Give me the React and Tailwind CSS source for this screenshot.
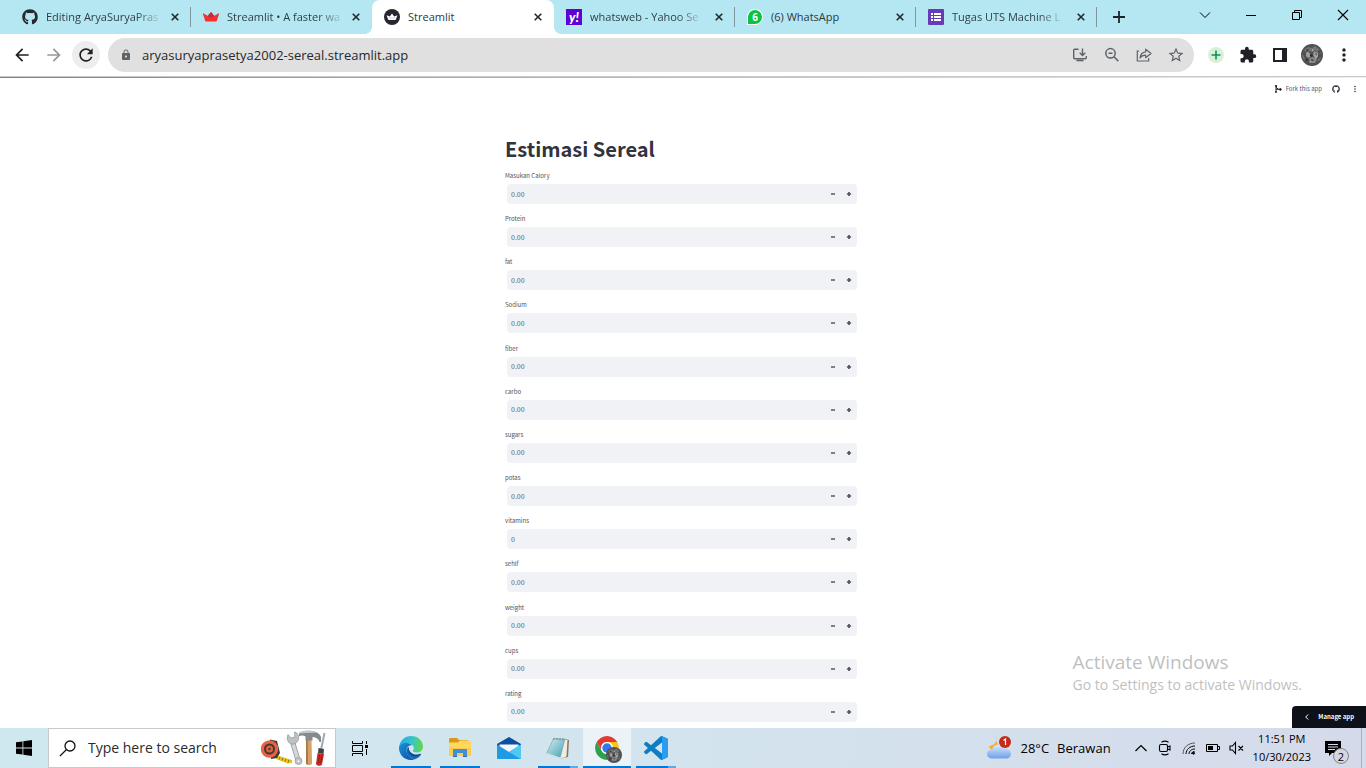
import React, { useState } from "react";
import { FaGithub } from "react-icons/fa";
import {
  MdArrowBack,
  MdArrowForward,
  MdRefresh,
  MdLock,
  MdStarBorder,
  MdExtension,
  MdMoreVert,
} from "react-icons/md";

const FIELDS = [
  ["calory", "Masukan Calory", "0.00"],
  ["protein", "Protein", "0.00"],
  ["fat", "fat", "0.00"],
  ["sodium", "Sodium", "0.00"],
  ["fiber", "fiber", "0.00"],
  ["carbo", "carbo", "0.00"],
  ["sugars", "sugars", "0.00"],
  ["potas", "potas", "0.00"],
  ["vitamins", "vitamins", "0"],
  ["sehlf", "sehlf", "0.00"],
  ["weight", "weight", "0.00"],
  ["cups", "cups", "0.00"],
  ["rating", "rating", "0.00"],
];

/* ---------- Tab icons ---------- */

function StreamlitCrown() {
  return (
    <svg viewBox="0 0 16 16" className="size-4">
      <path d="M0 4.200 4.600 7 8 3l3.400 4L16 4.200l-2 7.400c-.2.6-.6.9-1.200.9H3.200c-.6 0-1-.3-1.200-.9z" fill="#ff2b2b" />
      <path d="M8 3l3.400 4-1.400 1.500H6L4.600 7z" fill="#b5363d" />
      <path d="M0 4.200 4.600 7l1.400 1.500H1.200zM16 4.200 11.400 7 10 8.500h4.800z" fill="#e8373b" />
    </svg>
  );
}

function StreamlitRound() {
  return (
    <svg viewBox="0 0 16 16" className="size-4">
      <circle cx="8" cy="8" r="8" fill="#262730" />
      <path d="M2.600 6.200 5.800 7.600 8 4.600l2.200 3 3.200-1.400-1.400 4c-.2.5-.5.7-1 .7H5c-.5 0-.8-.2-1-.7z" fill="#fff" />
      <path d="M4.500 9h7" stroke="#b9bac0" strokeWidth=".6" />
    </svg>
  );
}

function YahooIcon() {
  return (
    <span className="flex size-4 items-center justify-center bg-[#5f01d1] font-['Lato','Liberation_Sans',sans-serif] text-[13px] leading-none font-black text-white italic">
      y!
    </span>
  );
}

function WhatsAppIcon() {
  return (
    <span className="flex size-4 items-center justify-center rounded-full rounded-bl-sm border border-white bg-[#0dc143] font-['Open_Sans',sans-serif] text-[10px] leading-none font-bold text-white">
      6
    </span>
  );
}

function FormsIcon() {
  return (
    <svg viewBox="0 0 16 16" className="size-4">
      <rect width="16" height="16" rx="1" fill="#673ab7" />
      <path d="M3 4h2v2H3zM3 7h2v2H3zM3 10h2v2H3zM6 4h7v2H6zM6 7h7v2H6zM6 10h7v2H6z" fill="#fff" />
    </svg>
  );
}

const TABS = [
  { title: "Editing AryaSuryaPras", icon: <FaGithub className="size-4 text-[#24292f]" />, line: true, fade: true },
  { title: "Streamlit • A faster wa", icon: <StreamlitCrown />, fade: true },
  { title: "Streamlit", icon: <StreamlitRound />, active: true },
  { title: "whatsweb - Yahoo Se", icon: <YahooIcon />, line: true, fade: true },
  { title: "(6) WhatsApp", icon: <WhatsAppIcon />, line: true },
  { title: "Tugas UTS Machine L", icon: <FormsIcon />, line: true, fade: true },
];

function Tab({ tab }) {
  return (
    <div
      className={
        tab.active
          ? "relative flex h-full min-w-0 flex-[0_1_182px] items-center rounded-t-lg bg-white px-3 before:absolute before:bottom-0 before:-left-2 before:size-2 before:bg-[radial-gradient(circle_at_0_0,transparent_8px,white_8px)] after:absolute after:-right-2 after:bottom-0 after:size-2 after:bg-[radial-gradient(circle_at_100%_0,transparent_8px,white_8px)]"
          : "relative flex h-full min-w-0 flex-[0_1_181px] items-center px-3"
      }
    >
      {tab.icon}
      <button
        type="button"
        className={
          tab.fade
            ? "ml-2 bg-linear-to-r from-[#2a3a40] from-80% to-[#a5c6ce] bg-clip-text text-[11px] leading-4 whitespace-nowrap text-transparent"
            : "ml-2 text-[11px] leading-4 whitespace-nowrap text-[#2a3a40]"
        }
      >
        {tab.title}
      </button>
      <button type="button" aria-label="Close tab" className="ml-auto text-[#20292c]">
        <svg viewBox="0 0 8 8" className="size-2">
          <path d="M.7.7l6.600 6.600M7.300.7.7 7.300" stroke="currentColor" strokeWidth="1.600" />
        </svg>
      </button>
      {tab.line && <span className="absolute right-0 h-5 w-px bg-[#7d979d]" />}
    </div>
  );
}

function TabStrip() {
  return (
    <div className="flex h-[34px] items-center bg-[#b4e7f2] pl-2.5">
      {TABS.map((t) => (
        <Tab key={t.title} tab={t} />
      ))}
      <button type="button" aria-label="New tab" className="ml-4 text-[#1c2629]">
        <svg viewBox="0 0 12 12" className="size-3">
          <path d="M6 0v12M0 6h12" stroke="currentColor" strokeWidth="1.800" />
        </svg>
      </button>
      <div className="mb-1 ml-auto flex text-black">
        <button type="button" aria-label="Search tabs" className="flex w-[46px] justify-center">
          <svg viewBox="0 0 12 12" className="size-3" fill="none" stroke="currentColor">
            <path d="M1 3.500l5 5 5-5" />
          </svg>
        </button>
        <button type="button" aria-label="Minimize" className="flex w-[46px] justify-center">
          <svg viewBox="0 0 12 12" className="size-3">
            <path d="M1 6h10v1H1z" />
          </svg>
        </button>
        <button type="button" aria-label="Restore" className="flex w-[46px] justify-center">
          <svg viewBox="0 0 12 12" className="size-3" fill="none" stroke="currentColor">
            <path d="M1.500 3.500h7v7h-7zM3.500 3V1.500h7v7H9" />
          </svg>
        </button>
        <button type="button" aria-label="Close window" className="flex w-[46px] justify-center">
          <svg viewBox="0 0 12 12" className="size-3" fill="none" stroke="currentColor" strokeWidth="1.100">
            <path d="M1 1l10 10M11 1L1 11" />
          </svg>
        </button>
      </div>
    </div>
  );
}

/* ---------- Toolbar ---------- */

function IconButton({ label, children }) {
  return (
    <button type="button" aria-label={label} className="flex size-8 shrink-0 items-center justify-center">
      {children}
    </button>
  );
}

function PhotoAvatar({ className }) {
  return (
    <svg viewBox="0 0 22 22" className={className}>
      <circle cx="11" cy="11" r="11" fill="#505050" />
      <path d="M3 6l4-3 4 1 3-2 4 3 2 5-3-1-3-3-3 2-3-1-2 3z" fill="#747474" />
      <path d="M5 9l4 0 1 3-3 2-2-2zM13 7l4 2 0 4-3 1-2-3z" fill="#9c9c9c" />
      <path d="M8 14l4-1 4 2-2 4-5 0z" fill="#868686" />
      <path d="M1 10l2 2 1 4-2-1zM17 15l3-2-1 3-3 2z" fill="#707070" />
      <path d="M9 10l3 1-1 2-2-1zM14 9l2 1-1 1zM10 15l3 1-2 1zM18 6l1 3-2-1zM5 14l2 2-2 1zM6 5l2 1-3 2z" fill="#2a2a2a" />
      <path d="M11 5l2 1-2 1zM7 8l1 1-2 0zM15 12l1 2-2 1zM8 17l2 1-1 1z" fill="#bcbcbc" />
    </svg>
  );
}

function Toolbar() {
  return (
    <div className="flex h-[42px] items-center bg-white px-1.5">
      <IconButton label="Back">
        <MdArrowBack className="size-5 text-[#202124]" />
      </IconButton>
      <IconButton label="Forward">
        <MdArrowForward className="size-5 text-[#96989a]" />
      </IconButton>
      <IconButton label="Reload">
        <span className="flex size-7 items-center justify-center rounded-full bg-[#ededed]">
          <MdRefresh className="size-5 text-[#202124]" />
        </span>
      </IconButton>
      <div className="mx-1.5 flex h-[34px] min-w-0 flex-1 items-center rounded-full bg-[#e0e0e0] pr-0.5 pl-3">
        <MdLock className="size-3 text-[#5f6368]" />
        <input
          aria-label="Address"
          defaultValue="aryasuryaprasetya2002-sereal.streamlit.app"
          className="ml-2.5 min-w-0 flex-1 bg-transparent text-[13px] leading-5 text-[#26292c] outline-none"
        />
        <IconButton label="Install app">
          <svg viewBox="0 0 16 16" className="size-4" fill="none" stroke="#5f6368" strokeWidth="1.400">
            <path d="M6.500 2.200H2.700a1 1 0 0 0-1 1v7.600a1 1 0 0 0 1 1h10.600a1 1 0 0 0 1-1V9" />
            <path d="M10.500 1.500v6.700M7.700 5.700l2.800 2.800 2.800-2.800" />
            <path d="M4.500 12.700h7v1.600h-7z" fill="#5f6368" stroke="none" />
          </svg>
        </IconButton>
        <IconButton label="Zoom">
          <svg viewBox="0 0 16 16" className="size-4" fill="none" stroke="#5f6368" strokeWidth="1.500">
            <circle cx="6.500" cy="6.300" r="4.700" />
            <path d="M10 9.800l4.300 4.300M4.500 6.300h4" />
          </svg>
        </IconButton>
        <IconButton label="Share">
          <svg viewBox="0 0 16 16" className="size-4" fill="none" stroke="#5f6368" strokeWidth="1.200">
            <path d="M3.200 4H1.300v10h11.400v-3" />
            <path d="M9.700 2.200l5.300 4.300-5.300 4.200V8.200C7 8.200 5.200 9 4 11c.3-3.300 2.300-5.800 5.700-6.200z" strokeLinejoin="round" />
          </svg>
        </IconButton>
        <IconButton label="Bookmark">
          <MdStarBorder className="size-[18px] text-[#5f6368]" />
        </IconButton>
      </div>
      <IconButton label="Add-on">
        <span className="flex size-4 items-center justify-center rounded-full bg-[#d8f1d6]">
          <svg viewBox="0 0 10 10" className="size-2.5">
            <path d="M5 .5v9M.5 5h9" stroke="#0e8f66" strokeWidth="1.600" />
          </svg>
        </span>
      </IconButton>
      <IconButton label="Extensions">
        <MdExtension className="size-[18px] text-[#202124]" />
      </IconButton>
      <IconButton label="Side panel">
        <svg viewBox="0 0 14 14" className="size-3.5">
          <path d="M0 0h14v14H0zM2 2v10h7V2z" fill="#202124" fillRule="evenodd" />
        </svg>
      </IconButton>
      <IconButton label="Profile">
        <PhotoAvatar className="size-[22px]" />
      </IconButton>
      <IconButton label="Menu">
        <MdMoreVert className="size-5 text-[#202124]" />
      </IconButton>
    </div>
  );
}

/* ---------- App page ---------- */

function NumberField({ id, label, initial }) {
  const [value, setValue] = useState(initial);
  const step = (d) => {
    const digits = initial.includes(".") ? 2 : 0;
    const next = Math.max(0, (parseFloat(value) || 0) + d * (digits ? 0.01 : 1));
    setValue(next.toFixed(digits));
  };
  return (
    <div>
      <label htmlFor={id} className="block text-[6px] leading-[11px] text-[#50525e]">
        {label}
      </label>
      <div className="mt-[3px] ml-0.5 flex h-5 items-center overflow-hidden rounded bg-[#f0f2f6]">
        <input
          id={id}
          inputMode="decimal"
          value={value}
          onChange={(e) => setValue(e.target.value)}
          className="min-w-0 flex-1 bg-transparent pl-1 text-[7px] leading-[11px] text-[#4c5f66] outline-none"
        />
        <button type="button" aria-label={"Decrease " + label} onClick={() => step(-1)} className="flex h-full w-4 items-center justify-center">
          <svg viewBox="0 0 6 6" className="size-1.5">
            <path d="M1 2h4v2H1z" fill="#7d808a" />
          </svg>
        </button>
        <button type="button" aria-label={"Increase " + label} onClick={() => step(1)} className="flex h-full w-4 items-center justify-center">
          <svg viewBox="0 0 6 6" className="size-1.5">
            <path d="M3 .9v4.200M.9 3h4.200" stroke="#50535e" strokeWidth="1.700" />
          </svg>
        </button>
      </div>
    </div>
  );
}

function StreamlitPage() {
  return (
    <main className="relative flex flex-1 flex-col bg-white font-['Noto_Sans_CJK_SC',sans-serif] text-[#31333f]">
      <header className="flex h-[22px] items-center justify-end pr-1.5">
        <a href="#fork" className="flex items-center gap-1 text-[6px] leading-3 text-[#515b70]">
          <svg viewBox="0 0 8 8" className="size-2" fill="none" stroke="#262730" strokeWidth="1">
            <path d="M2 .5v7M2 4.300h4M2 2.300l2.500 2" />
            <circle cx="2" cy="1" r=".7" fill="#262730" />
            <circle cx="2" cy="7" r=".5" fill="#262730" />
            <circle cx="6.400" cy="4.400" r=".9" fill="#262730" />
          </svg>
          Fork this app
        </a>
        <a href="#github" aria-label="Source on GitHub" className="ml-2.5">
          <FaGithub className="size-2" />
        </a>
        <button type="button" aria-label="App menu" className="ml-2.5">
          <MdMoreVert className="size-2.5" />
        </button>
      </header>
      <div className="flex flex-1 flex-col pt-9 pr-1 pb-1.5">
        <form onSubmit={(e) => e.preventDefault()} className="mx-auto flex w-full max-w-88 flex-1 flex-col">
          <h1 className="text-xl leading-[26px] font-bold">Estimasi Sereal</h1>
          <div className="mt-2 flex flex-1 flex-col justify-between">
            {FIELDS.map(([id, label, initial]) => (
              <NumberField key={id} id={id} label={label} initial={initial} />
            ))}
          </div>
        </form>
      </div>
      <div className="pointer-events-none absolute right-16 bottom-8 font-['Open_Sans',sans-serif] text-[#bfbfbf]">
        <p className="text-[19px] leading-6">Activate Windows</p>
        <p className="text-sm leading-[22px]">Go to Settings to activate Windows.</p>
      </div>
      <button
        type="button"
        className="absolute right-0 bottom-0 flex h-[22px] items-center gap-2 rounded-tl bg-[#0e1117] px-3 text-[6px] leading-3 font-bold text-white"
      >
        <svg viewBox="0 0 6 6" className="size-1.5" fill="none" stroke="#fff" strokeWidth="1">
          <path d="M4.200.5L1.700 3l2.500 2.500" />
        </svg>
        Manage app
      </button>
    </main>
  );
}

/* ---------- Taskbar ---------- */

function ToolsArt() {
  return (
    <svg viewBox="0 0 66 38" className="h-[38px] w-[66px] shrink-0">
      <path d="M15 26l16 5v3l-4 .5L15 30z" fill="#e8c51e" />
      <path d="M19 28l-1 2.500M22 29l-1 2.500M25 30l-1 2.500M28 31l-1 2.500" stroke="#5b4a10" strokeWidth=".7" />
      <path d="M9 10.500l7 1.500 3 12-3 5-6 1z" fill="#3e3a3c" />
      <circle cx="8.500" cy="20" r="8.700" fill="#ea6242" />
      <circle cx="8.500" cy="20" r="5.500" fill="#42373a" />
      <circle cx="8.500" cy="20" r="3.500" fill="#e0603f" />
      <circle cx="8.500" cy="20" r="1.300" fill="#4b3c3f" />
      <path d="M31.500 13l5.500 18" stroke="#8d9397" strokeWidth="5" />
      <path d="M31.500 13l5.500 18" stroke="#d3d7d9" strokeWidth="3.600" />
      <path d="M27 5.500l3 3.500 4-1-.5-5c4 1 5 5 3.500 8.500-2 4-7 5-9.500 1.500-1.500-2.500-1.700-5-.5-7.500z" fill="#bcc1c4" stroke="#8d9397" strokeWidth=".7" />
      <circle cx="37.500" cy="32" r="3.500" fill="#c3c8cb" stroke="#8d9397" strokeWidth=".7" />
      <circle cx="37.500" cy="32.300" r="1.300" fill="#fff" stroke="#8d9397" strokeWidth=".4" />
      <path d="M45 10h5.500l.5 24.500c-1 2-5 2-6 0z" fill="#d6a066" />
      <path d="M45 10h1.700l.3 25.500c-1-.1-1.600-.5-2-1z" fill="#a97743" />
      <path d="M38 4c3-2.200 9-2.500 13-2 4 .5 8 2.500 9 6v5l-1.500 0c-1-3-3-4.500-7-5v3.500h-7V7.500c-2-1.500-4-1.300-6.500-.5z" fill="#858a90" />
      <path d="M38 4c3-2.200 9-2.500 13-2l5 1.800c-6-.3-12-.3-17.500.7z" fill="#c6cacd" />
      <path d="M63.500 4l-3.500 17" stroke="#a4a9ad" strokeWidth="2" />
      <path d="M57.500 19l5.500 1-.5 5-5.500-1z" fill="#39434b" />
      <path d="M56.500 24l6.500 1-2 10.500c-1 2-5.500 1.500-6-.5z" fill="#cc2b23" />
      <path d="M58.500 25.500l-1.200 9M61 26l-1.200 8" stroke="#7c1916" strokeWidth=".8" />
    </svg>
  );
}

function EdgeIcon() {
  return (
    <svg viewBox="0 0 24 24" className="size-6">
      <defs>
        <linearGradient id="edgeTop" x1="0" y1=".3" x2="1" y2=".4">
          <stop offset="0" stopColor="#2aa5dc" />
          <stop offset=".5" stopColor="#35c3cf" />
          <stop offset="1" stopColor="#62d84c" />
        </linearGradient>
        <linearGradient id="edgeLow" x1="0" y1="0" x2="1" y2="1">
          <stop offset="0" stopColor="#1b8fdc" />
          <stop offset="1" stopColor="#0b51a4" />
        </linearGradient>
      </defs>
      <path d="M.2 11C1 4.500 6 0 12 0c7 0 12 5 12 10.500 0 4-3 6-6.500 6-2.500 0-3.700-.8-3.700-1.500 0-.6 1-1 1-2.800 0-2.500-2.300-4.700-6-4.700C4.500 7.500 1 9 .2 11z" fill="url(#edgeTop)" />
      <path d="M0 12c0-3.500 4-5 7.500-5 2.500 0 4.500 1 5.800 2.300C9.500 8.300 7.300 12 7.600 15c.3 4.500 3.800 7.500 7.400 8.500-1 .4-2 .5-3 .5-7 0-12-5.500-12-12z" fill="url(#edgeLow)" />
      <path d="M9.700 11c-3 3-1.700 9 3 10.500 3.500 1 7-.3 9.300-3 .4-.5.1-.9-.4-.7C16 20 9.500 17.300 9.700 11z" fill="#114a8b" />
      <path d="M7.600 15c.3 4.500 3.800 7.500 7.400 8.500 3-.6 5.500-2.500 7-5-4 3-9 2.500-11.500-1-1.300-2-1.500-4.500-.8-6.500-1.300 1-2.200 2.500-2.100 4z" fill="#1668b8" />
    </svg>
  );
}

function ExplorerIcon() {
  return (
    <svg viewBox="0 0 22 20" className="h-5 w-[22px]">
      <path d="M0 1.500C0 .7.500 0 1.500 0H8l2 2h9v5H0z" fill="#d89a14" />
      <path d="M0 4.500h9l2-2h10c.6 0 1 .4 1 1V17c0 .6-.4 1-1 1H1c-.6 0-1-.4-1-1z" fill="#ffd75e" />
      <path d="M0 10h22v7c0 .6-.4 1-1 1H1c-.6 0-1-.4-1-1z" fill="#fbcb50" />
      <path d="M4 18v-6c0-.7.4-1 1-1h12c.6 0 1 .3 1 1v6h-4v-3H8v3z" fill="#3f8fd4" />
      <path d="M4 18h4v1H4zM14 18h4v1h-4z" fill="#2b6fae" />
    </svg>
  );
}

function MailIcon() {
  return (
    <svg viewBox="0 0 24 22" className="h-[22px] w-6">
      <path d="M0 7L12 0l12 7v2H0z" fill="#0a4fa0" />
      <path d="M2.500 7.500h19v6L12 17l-9.500-4z" fill="#f4f8fb" />
      <path d="M0 7.500l12 7.500 12-7.500V21c0 .6-.4 1-1 1H1c-.6 0-1-.4-1-1z" fill="#2199e4" />
      <path d="M24 7.500L12 15l11.500 7c.3-.2.5-.6.5-1z" fill="#50c8f4" />
    </svg>
  );
}

function NotepadIcon() {
  return (
    <svg viewBox="0 0 24 24" className="size-6">
      <defs>
        <linearGradient id="pad" x1="0" y1="0" x2="1" y2="1">
          <stop offset="0" stopColor="#d3f0f4" />
          <stop offset="1" stopColor="#459fb0" />
        </linearGradient>
      </defs>
      <path d="M19 3l4 1-1 17-7 1.500z" fill="#8b7355" />
      <path d="M18 3.500l3.500.5-1 16.500-6 1.500z" fill="#efece4" />
      <path d="M7.500 2.500L19 3l-5 19-13.500-4.500z" fill="url(#pad)" stroke="#6a8f97" strokeWidth=".5" />
      <path d="M.5 17.500L14 22l6-1.500" fill="none" stroke="#dcebed" strokeWidth="1.200" />
      <path d="M8 2v2M11 2v2M14 2.300v2M17 2.500v2" stroke="#666f72" strokeWidth=".8" />
    </svg>
  );
}

function ChromeIcon() {
  return (
    <span className="relative flex">
      <svg viewBox="0 0 48 48" className="size-[26px]">
        <path d="M4.950 13A22 22 0 0 1 43.050 13H24A11 11 0 0 0 14.470 29.500Z" fill="#e33b2e" />
        <path d="M43.050 13A22 22 0 0 1 24 46L33.530 29.500A11 11 0 0 0 24 13Z" fill="#fcc31e" />
        <path d="M24 46A22 22 0 0 1 4.950 13L14.470 29.500A11 11 0 0 0 33.530 29.500Z" fill="#2ba24c" />
        <circle cx="24" cy="24" r="11" fill="#fff" />
        <circle cx="24" cy="24" r="8.700" fill="#3479e8" />
      </svg>
      <span className="absolute -right-0.5 -bottom-0.5">
        <PhotoAvatar className="size-4" />
      </span>
    </span>
  );
}

function CodeIcon() {
  return (
    <svg viewBox="0 0 24 24" className="size-6">
      <path
        d="M23.150 2.587L18.210.21a1.494 1.494 0 0 0-1.705.29l-9.460 8.630-4.120-3.128a.999.999 0 0 0-1.276.057L.327 7.261A1 1 0 0 0 .326 8.740L3.899 12 .326 15.260a1 1 0 0 0 .001 1.479L1.650 17.940a.999.999 0 0 0 1.276.057l4.120-3.128 9.460 8.630a1.492 1.492 0 0 0 1.704.29l4.942-2.377A1.500 1.500 0 0 0 24 20.060V3.939a1.500 1.500 0 0 0-.85-1.352zm-5.146 14.861L10.826 12l7.178-5.448v10.896z"
        fill="#0f7dc4"
      />
      <path d="M18 .2l5.150 2.387c.5.25.85.8.85 1.352V20.060c0 .6-.3 1.100-.85 1.353L18 23.800z" fill="#2a9df0" />
    </svg>
  );
}

const APPS = [
  { name: "Edge", icon: <EdgeIcon />, open: "one" },
  { name: "File Explorer", icon: <ExplorerIcon />, open: "one" },
  { name: "Mail", icon: <MailIcon />, open: "" },
  { name: "Notepad", icon: <NotepadIcon />, open: "many" },
  { name: "Chrome", icon: <ChromeIcon />, open: "focus" },
  { name: "Visual Studio Code", icon: <CodeIcon />, open: "many" },
];

function TaskApp({ app }) {
  return (
    <button
      type="button"
      aria-label={app.name}
      className={
        app.open === "focus"
          ? "relative flex h-10 w-12 items-center justify-center bg-[#ebf3f8]"
          : "relative flex h-10 w-12 items-center justify-center"
      }
    >
      {app.icon}
      {app.open === "focus" && <span className="absolute inset-x-0 bottom-0 h-0.5 bg-[#0078d7]" />}
      {app.open === "one" && <span className="absolute inset-x-1 bottom-0 h-0.5 bg-[#0078d7]" />}
      {app.open === "many" && (
        <span className="absolute inset-x-1 bottom-0 h-0.5 border-r-8 border-[#60a9e4] bg-[#0078d7]" />
      )}
    </button>
  );
}

function WeatherIcon() {
  return (
    <svg viewBox="0 0 26 26" className="size-[26px]">
      <defs>
        <linearGradient id="cloud" x1="0" y1="0" x2="0" y2="1">
          <stop offset="0" stopColor="#d8ebff" />
          <stop offset="1" stopColor="#6f9fe8" />
        </linearGradient>
      </defs>
      <path d="M10.500 2c-1 5 1 9 7 10-2 4-7 5-10.500 3.500-2-.8-3.500-2.500-4-4.500 5 0 8-4 7.500-9z" fill="#f8a927" />
      <path d="M6.500 23.500C3 23.500 1 21.600 1 19s2.200-4.500 5-4.500C6.800 11.300 9.600 9.500 12.500 9.500c3.200 0 5.700 1.900 6.500 4.800 3.500-.2 6 1.700 6 4.700 0 2.700-2 4.500-5 4.500z" fill="url(#cloud)" />
      <circle cx="19" cy="7" r="6" fill="#c42b1c" />
      <path d="M17.500 5.500l2-1.500v6" fill="none" stroke="#fff" strokeWidth="1.200" />
    </svg>
  );
}

function Tray() {
  return (
    <div className="ml-auto flex h-10 items-center text-black">
      <button type="button" className="flex items-center text-[13px] leading-4">
        <WeatherIcon />
        <span className="ml-2">28°C</span>
        <span className="ml-2">Berawan</span>
      </button>
      <div className="ml-[18px] flex">
        <button type="button" aria-label="Show hidden icons" className="flex w-6 justify-center">
          <svg viewBox="0 0 16 16" className="size-4" fill="none" stroke="#000" strokeWidth="1.200">
            <path d="M2.500 11L8 5.500l5.500 5.500" />
          </svg>
        </button>
        <button type="button" aria-label="Meet now" className="flex w-6 justify-center">
          <svg viewBox="0 0 16 16" className="size-4" fill="none" stroke="#000" strokeWidth="1.100">
            <rect x="2.500" y="4.500" width="8" height="7" rx="1.500" />
            <path d="M10.500 7l2.500-1v4l-2.500-1M4.500 2.300Q8 0 11.500 2.300M4.500 13.700Q8 16 11.500 13.700" />
          </svg>
        </button>
        <button type="button" aria-label="Network" className="flex w-6 justify-center">
          <svg viewBox="0 0 16 16" className="size-4" fill="none" stroke="#000">
            <path d="M2 14C2 7.500 7 3 14 3" stroke="#555" />
            <path d="M5 14c0-4.500 4-8 9-8M8 14c0-3 2.500-5 6-5" />
            <path d="M10.500 14c0-1.500 1.500-2.500 3-2.500" />
            <circle cx="12.500" cy="13.200" r="1" fill="#000" />
          </svg>
        </button>
        <button type="button" aria-label="Battery" className="flex w-6 justify-center">
          <svg viewBox="0 0 16 16" className="size-4" fill="none" stroke="#000">
            <path d="M1.500 4.500h11v7h-11zM13 6.500h1.500v3H13" />
            <path d="M3 6h5v4H3z" fill="#000" stroke="none" />
          </svg>
        </button>
        <button type="button" aria-label="Volume muted" className="flex w-6 justify-center">
          <svg viewBox="0 0 16 16" className="size-4" fill="none" stroke="#000" strokeWidth="1.100">
            <path d="M1 6h2.500L6.500 2.500v11L3.500 10H1zM9.500 6l4.500 4.500M14 6L9.500 10.500" />
          </svg>
        </button>
      </div>
      <div className="ml-1 flex flex-col text-center text-[11px] leading-[18px]">
        <time>11:51 PM</time>
        <time>10/30/2023</time>
      </div>
      <button type="button" aria-label="Notifications" className="relative ml-3.5 flex size-6 items-center">
        <svg viewBox="0 0 16 16" className="size-4">
          <path d="M0 1h16v12H7l-3 3v-3H0z" />
          <path d="M3 4h10v1H3zM3 6.500h10v1H3zM3 9h7v1H3z" fill="#d5dcea" />
        </svg>
        <span className="absolute right-0 -bottom-1 flex size-4 items-center justify-center rounded-full border border-[#7e838b] bg-[#d3d8e0] text-[11px] leading-none">
          2
        </span>
      </button>
      <span className="ml-3 h-10 w-[5px] border-l border-[#a9afbc]" />
    </div>
  );
}

function Taskbar() {
  return (
    <footer className="flex h-10 items-center bg-linear-to-r from-[#cfe8ef] via-[#d3e4ee] to-[#d5daea]">
      <button type="button" aria-label="Start" className="flex w-12 justify-center">
        <svg viewBox="0 0 16 16" className="size-4">
          <path d="M0 2.300L6.500 1.400v6.200H0zM7.300 1.300L16 0v7.600H7.300zM0 8.400h6.500v6.200L0 13.700zM7.300 8.400H16V16l-8.700-1.300z" />
        </svg>
      </button>
      <label className="flex h-10 w-72 min-w-0 items-center border border-[#c6cacc] bg-white pr-2 pl-2.5">
        <svg viewBox="0 0 18 18" className="size-[18px] shrink-0" fill="none" stroke="#111" strokeWidth="1.300">
          <circle cx="11" cy="7" r="5" />
          <path d="M7.500 10.500L1 17" />
        </svg>
        <input
          aria-label="Search"
          placeholder="Type here to search"
          className="ml-[11px] min-w-0 flex-1 text-sm leading-5 outline-none placeholder:text-[#2b2b2b]"
        />
        <ToolsArt />
      </label>
      <button type="button" aria-label="Task view" className="flex w-12 justify-center">
        <svg viewBox="0 0 16 16" className="size-4" fill="none" stroke="#000">
          <path d="M.5 1v2.500h10V1M.5 5.500h10v6H.5zM.5 16v-2.500h10V16M14.500 1v3M14.500 9v6" />
          <path d="M13 5h3v3h-3z" fill="#000" stroke="none" />
        </svg>
      </button>
      <nav className="ml-[3px] flex gap-px">
        {APPS.map((a) => (
          <TaskApp key={a.name} app={a} />
        ))}
      </nav>
      <Tray />
    </footer>
  );
}

export default function App() {
  return (
    <div className="flex min-h-screen flex-col bg-white font-['Open_Sans','Noto_Sans',sans-serif]">
      <TabStrip />
      <Toolbar />
      <div className="h-px bg-[#c9c9c9]" />
      <div className="h-px bg-linear-to-r from-[#ff4b4b] to-[#fffd80]" />
      <StreamlitPage />
      <Taskbar />
    </div>
  );
}
